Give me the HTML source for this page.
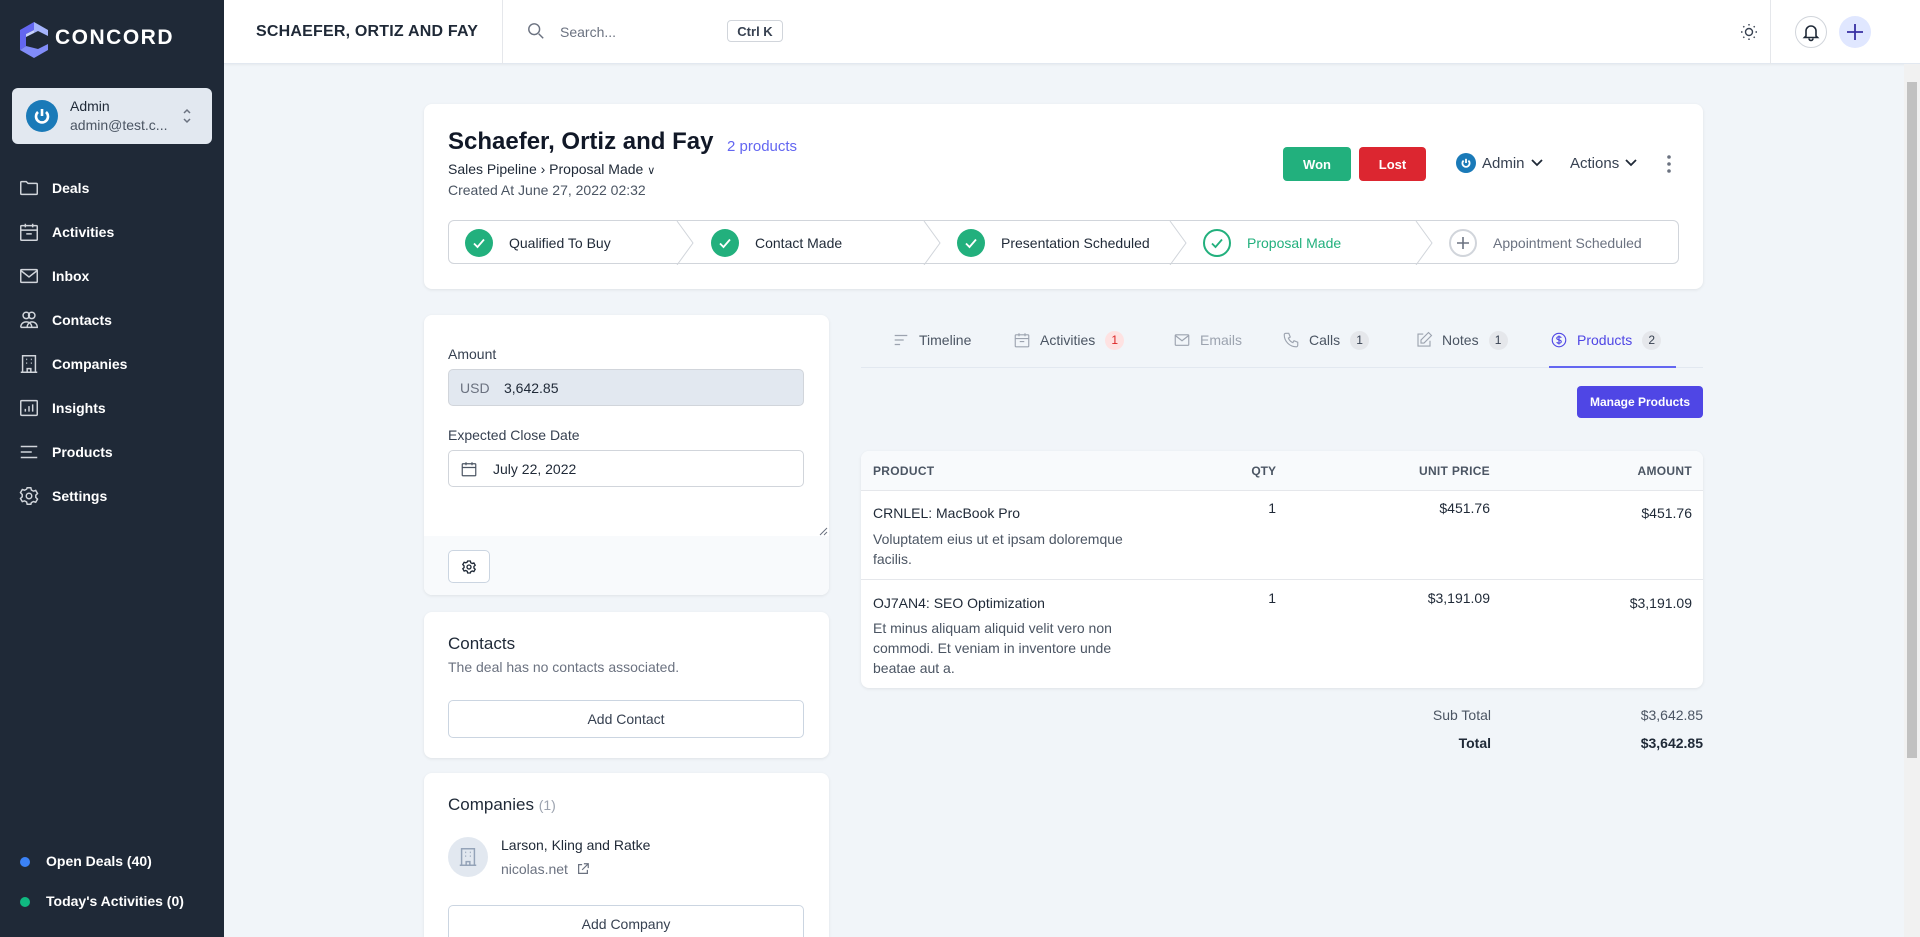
<!DOCTYPE html>
<html style="overflow:hidden;height:937px"><head><meta charset="utf-8">
<style>
*{box-sizing:border-box;margin:0;padding:0}
body{width:1920px;height:937px;overflow:hidden;font-family:"Liberation Sans",sans-serif;background:#f1f5f9;color:#1f2937;font-size:14px;position:relative}
.a{position:absolute}
.sb{left:0;top:0;width:224px;height:937px;background:#1f2937}
.nav{left:18px;color:#fff;font-weight:700;font-size:14px;display:flex;align-items:center;height:24px}
.nav svg{width:22px;height:22px;margin-right:12px;stroke:#d1d5db;fill:none;stroke-width:1.6}
.top{left:224px;top:0;width:1696px;height:64px;background:#fff;border-bottom:1px solid #e2e8f0;box-shadow:0 1px 2px rgba(0,0,0,.05)}
.card{background:#fff;border-radius:8px;box-shadow:0 1px 3px rgba(0,0,0,.08)}
.seg{position:absolute;top:0;height:44px;display:flex;align-items:center;font-size:14px}
.chk{width:28px;height:28px;border-radius:50%;background:#22b07d;display:flex;align-items:center;justify-content:center;margin-right:16px}
.tab{position:absolute;top:330px;display:flex;align-items:center;font-size:14px;color:#4b5563;height:20px}
.tab svg{width:18px;height:18px;stroke:#9ca3af;fill:none;stroke-width:1.5;margin-right:9px}
.badge{margin-left:10px;background:#e5e7eb;border-radius:50%;width:19px;height:19px;font-size:12px;display:flex;align-items:center;justify-content:center;color:#374151}
.btn{border:1px solid #cbd5e1;border-radius:5px;background:#fff;display:flex;align-items:center;justify-content:center;font-size:14px;color:#374151}
.r{text-align:right}
</style></head><body>
<div class="a sb"></div>
<svg class="a" style="left:18px;top:22px" width="32" height="36" viewBox="0 0 32 36"><polygon points="16,0 30,8 30,14 20,9 16,11 16,0" fill="#a5b4fc"/><polygon points="16,0 2,8 2,28 8,24 8,12 16,8" fill="#6366f1"/><polygon points="2,28 16,36 30,28 30,22 20,27 8,24" fill="#818cf8"/><polygon points="8,12 16,8 16,11 8,15" fill="#c7d2fe"/></svg>
<div class="a" style="left:55px;top:26px;color:#fff;font-size:21px;font-weight:700;letter-spacing:1.5px">CONCORD</div>
<div class="a" style="left:12px;top:88px;width:200px;height:56px;background:#e2e8f0;border-radius:6px"></div>
<div class="a" style="left:26px;top:100px;width:32px;height:32px;border-radius:50%;background:#1a7ab8"></div>
<svg class="a" style="left:32px;top:106px" width="20" height="20" viewBox="0 0 20 20"><path d="M6 6 A6 6 0 1 0 14 6" stroke="#fff" stroke-width="2.6" fill="none"/><path d="M10 3v7" stroke="#fff" stroke-width="2.6"/></svg>
<div class="a" style="left:70px;top:98px;font-size:14px;color:#1f2937">Admin</div>
<div class="a" style="left:70px;top:117px;font-size:14px;color:#4b5563">admin@test.c...</div>
<svg class="a" style="left:181px;top:107px" width="12" height="18" viewBox="0 0 12 18" fill="none" stroke="#6b7280" stroke-width="1.5"><path d="M3 6l3-3 3 3M3 12l3 3 3-3"/></svg>

<div class="a nav" style="top:176px"><svg viewBox="0 0 24 24"><path d="M3 6a1 1 0 0 1 1-1h5l2 2h9a1 1 0 0 1 1 1v10a1 1 0 0 1-1 1H4a1 1 0 0 1-1-1z"/></svg>Deals</div>
<div class="a nav" style="top:220px"><svg viewBox="0 0 24 24"><rect x="3" y="5" width="18" height="16" rx="1"/><path d="M8 3v4M16 3v4M3 10h18M9 14h6"/></svg>Activities</div>
<div class="a nav" style="top:264px"><svg viewBox="0 0 24 24"><rect x="3" y="5" width="18" height="14" rx="1"/><path d="M3 6l9 7 9-7"/></svg>Inbox</div>
<div class="a nav" style="top:308px"><svg viewBox="0 0 24 24"><circle cx="9" cy="7" r="3.5"/><circle cx="15" cy="7" r="3.5"/><path d="M3 20c0-4 3-6 6-6s6 2 6 6M10 20c0-4 3-6 5-6 3 0 6 2 6 6H3"/></svg>Contacts</div>
<div class="a nav" style="top:352px"><svg viewBox="0 0 24 24"><path d="M5 21V3h14v18M3 21h18M9 7h1M14 7h1M9 11h1M14 11h1M10 21v-4h4v4"/></svg>Companies</div>
<div class="a nav" style="top:396px"><svg viewBox="0 0 24 24"><rect x="3" y="4" width="18" height="16" rx="1"/><path d="M8 16v-3M12 16v-6M16 16v-8"/></svg>Insights</div>
<div class="a nav" style="top:440px"><svg viewBox="0 0 24 24"><path d="M3 6h18M3 12h12M3 18h18"/></svg>Products</div>
<div class="a nav" style="top:484px"><svg viewBox="0 0 24 24"><circle cx="12" cy="12" r="3"/><path d="M10 3h4l.6 2.5 2.2 1.2 2.5-.8 2 3.4-1.9 1.8v2.5l1.9 1.8-2 3.4-2.5-.8-2.2 1.2L14 21h-4l-.6-2.5-2.2-1.2-2.5.8-2-3.4 1.9-1.8v-2.5L2.7 8.3l2-3.4 2.5.8 2.2-1.2z"/></svg>Settings</div>
<div class="a" style="left:20px;top:857px;width:10px;height:10px;border-radius:50%;background:#3b82f6"></div>
<div class="a" style="left:46px;top:853px;color:#fff;font-weight:700;font-size:14px">Open Deals (40)</div>
<div class="a" style="left:20px;top:897px;width:10px;height:10px;border-radius:50%;background:#10b981"></div>
<div class="a" style="left:46px;top:893px;color:#fff;font-weight:700;font-size:14px">Today's Activities (0)</div>

<div class="a top"></div>
<div class="a" style="left:256px;top:23px;font-size:16px;font-weight:700;color:#1f2937;letter-spacing:.2px">SCHAEFER, ORTIZ AND FAY</div>
<div class="a" style="left:502px;top:0;width:1px;height:64px;background:#e5e7eb"></div>
<svg class="a" style="left:527px;top:22px" width="18" height="18" viewBox="0 0 20 20" fill="none" stroke="#6b7280" stroke-width="1.6"><circle cx="8" cy="8" r="6"/><path d="M13 13l5 5"/></svg>
<div class="a" style="left:560px;top:24px;color:#6b7280;font-size:14px">Search...</div>
<div class="a" style="left:727px;top:20px;width:56px;height:22px;border:1px solid #d1d5db;border-radius:4px;font-size:13px;font-weight:700;color:#374151;display:flex;align-items:center;justify-content:center">Ctrl K</div>
<svg class="a" style="left:1739px;top:22px" width="20" height="20" viewBox="0 0 20 20" fill="none" stroke="#374151" stroke-width="1.4"><circle cx="10" cy="10" r="3.5"/><path d="M10 2v1.5M10 16.5V18M2 10h1.5M16.5 10H18M4.3 4.3l1 1M14.7 14.7l1 1M4.3 15.7l1-1M14.7 5.3l1-1"/></svg>
<div class="a" style="left:1770px;top:0;width:1px;height:64px;background:#e5e7eb"></div>
<div class="a" style="left:1795px;top:16px;width:32px;height:32px;border-radius:50%;border:1px solid #d1d5db"></div>
<svg class="a" style="left:1801px;top:22px" width="20" height="20" viewBox="0 0 20 20" fill="none" stroke="#1f2937" stroke-width="1.6"><path d="M5 14V9a5 5 0 0 1 10 0v5l1.5 1.5h-13zM8 16.5a2 2 0 0 0 4 0"/></svg>
<div class="a" style="left:1839px;top:16px;width:32px;height:32px;border-radius:50%;background:#e0e7ff"></div>
<svg class="a" style="left:1845px;top:22px" width="20" height="20" viewBox="0 0 20 20" stroke="#3730a3" stroke-width="1.8"><path d="M10 2v16M2 10h16"/></svg>
<div class="a" style="left:1904px;top:64px;width:16px;height:873px;background:#f1f1f1"></div>
<div class="a" style="left:1907px;top:82px;width:10px;height:676px;background:#c1c1c1"></div>

<div class="a card" style="left:424px;top:104px;width:1279px;height:185px"></div>
<div class="a" style="left:448px;top:128px;font-size:24px;font-weight:700;color:#111827">Schaefer, Ortiz and Fay</div>
<div class="a" style="left:727px;top:138px;font-size:15px;color:#6366f1">2 products</div>
<div class="a" style="left:448px;top:161px;font-size:14px;color:#1f2937">Sales Pipeline &#8250; Proposal Made <span style="font-size:11px">&#8744;</span></div>
<div class="a" style="left:448px;top:182px;font-size:14px;color:#4b5563">Created At June 27, 2022 02:32</div>
<div class="a" style="left:1283px;top:147px;width:68px;height:34px;background:#22b07d;border-radius:4px;color:#fff;font-size:13px;font-weight:700;display:flex;align-items:center;justify-content:center">Won</div>
<div class="a" style="left:1359px;top:147px;width:67px;height:34px;background:#dc2630;border-radius:4px;color:#fff;font-size:13px;font-weight:700;display:flex;align-items:center;justify-content:center">Lost</div>
<div class="a" style="left:1456px;top:153px;width:20px;height:20px;border-radius:50%;background:#1a7ab8"></div>
<svg class="a" style="left:1460px;top:157px" width="12" height="12" viewBox="0 0 20 20"><path d="M6 6 A6 6 0 1 0 14 6" stroke="#fff" stroke-width="3" fill="none"/><path d="M10 3v7" stroke="#fff" stroke-width="3"/></svg>
<div class="a" style="left:1482px;top:155px;font-size:15px;color:#374151">Admin</div>
<svg class="a" style="left:1530px;top:158px" width="14" height="10" viewBox="0 0 14 10" fill="none" stroke="#1f2937" stroke-width="1.8"><path d="M2 2l5 5 5-5"/></svg>
<div class="a" style="left:1570px;top:155px;font-size:15px;color:#374151">Actions</div>
<svg class="a" style="left:1624px;top:158px" width="14" height="10" viewBox="0 0 14 10" fill="none" stroke="#1f2937" stroke-width="1.8"><path d="M2 2l5 5 5-5"/></svg>
<svg class="a" style="left:1666px;top:154px" width="6" height="20" viewBox="0 0 6 20" fill="#6b7280"><circle cx="3" cy="3" r="1.8"/><circle cx="3" cy="10" r="1.8"/><circle cx="3" cy="17" r="1.8"/></svg>

<div class="a" style="left:448px;top:220px;width:1231px;height:44px;border:1px solid #d1d5db;border-radius:6px">
 <svg class="a" style="left:0;top:0" width="1231" height="44" fill="none" stroke="#d1d5db" stroke-width="1"><path d="M228 0l16 22-16 22M475 0l16 22-16 22M721 0l16 22-16 22M967 0l16 22-16 22"/></svg>
 <div class="seg" style="left:16px"><div class="chk"><svg width="16" height="16" viewBox="0 0 16 16" fill="none" stroke="#fff" stroke-width="1.8"><path d="M3 8.5l3.5 3.5L13 4.5"/></svg></div>Qualified To Buy</div>
 <div class="seg" style="left:262px"><div class="chk"><svg width="16" height="16" viewBox="0 0 16 16" fill="none" stroke="#fff" stroke-width="1.8"><path d="M3 8.5l3.5 3.5L13 4.5"/></svg></div>Contact Made</div>
 <div class="seg" style="left:508px"><div class="chk"><svg width="16" height="16" viewBox="0 0 16 16" fill="none" stroke="#fff" stroke-width="1.8"><path d="M3 8.5l3.5 3.5L13 4.5"/></svg></div>Presentation Scheduled</div>
 <div class="seg" style="left:754px;color:#22b07d"><div class="chk" style="background:#fff;border:2px solid #22b07d"><svg width="16" height="16" viewBox="0 0 16 16" fill="none" stroke="#22b07d" stroke-width="1.8"><path d="M3 8.5l3.5 3.5L13 4.5"/></svg></div>Proposal Made</div>
 <div class="seg" style="left:1000px;color:#6b7280"><div class="chk" style="background:#fff;border:2px solid #d1d5db"><svg width="16" height="16" viewBox="0 0 16 16" fill="none" stroke="#6b7280" stroke-width="1.6"><path d="M8 2v12M2 8h12"/></svg></div>Appointment Scheduled</div>
</div>

<div class="a card" style="left:424px;top:315px;width:405px;height:280px;overflow:hidden">
 <div class="a" style="left:0;top:221px;width:405px;height:59px;background:#f8fafc"></div>
</div>
<div class="a" style="left:448px;top:346px;font-size:14px;color:#374151">Amount</div>
<div class="a" style="left:448px;top:369px;width:356px;height:37px;background:#e2e8f0;border:1px solid #d1d5db;border-radius:5px"></div>
<div class="a" style="left:460px;top:380px;font-size:14px;color:#6b7280">USD</div>
<div class="a" style="left:504px;top:380px;font-size:14px;color:#1f2937">3,642.85</div>
<div class="a" style="left:448px;top:427px;font-size:14px;color:#374151">Expected Close Date</div>
<div class="a" style="left:448px;top:450px;width:356px;height:37px;background:#fff;border:1px solid #d1d5db;border-radius:5px"></div>
<svg class="a" style="left:460px;top:460px" width="18" height="18" viewBox="0 0 24 24" fill="none" stroke="#4b5563" stroke-width="1.6"><rect x="3" y="5" width="18" height="16" rx="1"/><path d="M8 3v4M16 3v4M3 10h18"/></svg>
<div class="a" style="left:493px;top:461px;font-size:14px;color:#1f2937">July 22, 2022</div>
<svg class="a" style="left:818px;top:526px" width="10" height="10" viewBox="0 0 10 10" stroke="#6b7280"><path d="M9 2L2 9M9 6L6 9"/></svg>
<div class="a btn" style="left:448px;top:550px;width:42px;height:33px"><svg width="16" height="16" viewBox="0 0 24 24" fill="none" stroke="#1f2937" stroke-width="2"><circle cx="12" cy="12" r="3"/><path d="M10 3h4l.6 2.5 2.2 1.2 2.5-.8 2 3.4-1.9 1.8v2.5l1.9 1.8-2 3.4-2.5-.8-2.2 1.2L14 21h-4l-.6-2.5-2.2-1.2-2.5.8-2-3.4 1.9-1.8v-2.5L2.7 8.3l2-3.4 2.5.8 2.2-1.2z"/></svg></div>

<div class="a card" style="left:424px;top:612px;width:405px;height:146px"></div>
<div class="a" style="left:448px;top:634px;font-size:17px;color:#1f2937">Contacts</div>
<div class="a" style="left:448px;top:659px;font-size:14px;color:#6b7280">The deal has no contacts associated.</div>
<div class="a btn" style="left:448px;top:700px;width:356px;height:38px">Add Contact</div>

<div class="a card" style="left:424px;top:773px;width:405px;height:164px;border-radius:8px 8px 0 0"></div>
<div class="a" style="left:448px;top:795px;font-size:17px;color:#1f2937">Companies <span style="color:#9ca3af;font-size:14px">(1)</span></div>
<div class="a" style="left:448px;top:837px;width:40px;height:40px;border-radius:50%;background:#e2e8f0"></div>
<svg class="a" style="left:457px;top:846px" width="22" height="22" viewBox="0 0 24 24" fill="none" stroke="#94a3b8" stroke-width="1.6"><path d="M5 21V3h14v18M3 21h18M9 7h1M14 7h1M9 11h1M14 11h1M10 21v-4h4v4"/></svg>
<div class="a" style="left:501px;top:837px;font-size:14px;color:#1f2937">Larson, Kling and Ratke</div>
<div class="a" style="left:501px;top:861px;font-size:14px;color:#6b7280">nicolas.net</div>
<svg class="a" style="left:576px;top:862px" width="14" height="14" viewBox="0 0 16 16" fill="none" stroke="#6b7280" stroke-width="1.4"><path d="M7 3H3v10h10V9M9 2h5v5M14 2L7 9"/></svg>
<div class="a btn" style="left:448px;top:905px;width:356px;height:32px;border-bottom:none;border-radius:5px 5px 0 0;align-items:flex-start;padding-top:10px">Add Company</div>

<div class="a" style="left:861px;top:367px;width:842px;height:1px;background:#e2e8f0"></div>
<div class="a" style="left:1549px;top:366px;width:127px;height:2px;background:#6366f1"></div>
<div class="tab" style="left:892px"><svg viewBox="0 0 20 20"><path d="M3 5h14M3 10h10M3 15h6"/></svg>Timeline</div>
<div class="tab" style="left:1013px"><svg viewBox="0 0 24 24"><rect x="3" y="5" width="18" height="16" rx="1"/><path d="M8 3v4M16 3v4M3 10h18M9 14h6"/></svg>Activities<div class="badge" style="background:#fee2e2;color:#dc2626">1</div></div>
<div class="tab" style="left:1173px;color:#9ca3af"><svg viewBox="0 0 24 24"><rect x="3" y="5" width="18" height="14" rx="1"/><path d="M3 6l9 7 9-7"/></svg>Emails</div>
<div class="tab" style="left:1282px"><svg viewBox="0 0 24 24"><path d="M5 3h4l2 5-2.5 1.5a11 11 0 0 0 6 6L16 13l5 2v4a2 2 0 0 1-2 2A16 16 0 0 1 3 5a2 2 0 0 1 2-2"/></svg>Calls<div class="badge">1</div></div>
<div class="tab" style="left:1415px"><svg viewBox="0 0 24 24"><path d="M11 4H4v16h16v-7M18 2l4 4-10 10H8v-4z"/></svg>Notes<div class="badge">1</div></div>
<div class="tab" style="left:1550px;color:#4f46e5"><svg viewBox="0 0 24 24" style="stroke:#4f46e5"><circle cx="12" cy="12" r="9"/><path d="M15 9c-.5-1-1.5-1.5-3-1.5s-3 .8-3 2.2 1.5 1.8 3 2.2 3 .8 3 2.2-1.5 2.2-3 2.2-2.5-.5-3-1.5M12 6v12"/></svg>Products<div class="badge">2</div></div>

<div class="a" style="left:1577px;top:386px;width:126px;height:32px;background:#4f46e5;border-radius:4px;color:#fff;font-size:12px;font-weight:700;display:flex;align-items:center;justify-content:center">Manage Products</div>

<div class="a card" style="left:861px;top:451px;width:842px;height:237px;overflow:hidden">
 <div class="a" style="left:0;top:0;width:842px;height:40px;background:#f8fafc;border-bottom:1px solid #e5e7eb"></div>
 <div class="a" style="left:0;top:128px;width:842px;height:1px;background:#e5e7eb"></div>
</div>
<div class="a" style="left:873px;top:464px;font-size:12px;font-weight:700;color:#4b5563;letter-spacing:.3px">PRODUCT</div>
<div class="a r" style="left:1175px;width:101px;top:464px;font-size:12px;font-weight:700;color:#4b5563">QTY</div>
<div class="a r" style="left:1340px;width:150px;top:464px;font-size:12px;font-weight:700;color:#4b5563;letter-spacing:.3px">UNIT PRICE</div>
<div class="a r" style="left:1540px;width:152px;top:464px;font-size:12px;font-weight:700;color:#4b5563;letter-spacing:.3px">AMOUNT</div>

<div class="a" style="left:873px;top:505px;font-size:14px;color:#1f2937">CRNLEL: MacBook Pro</div>
<div class="a" style="left:873px;top:529px;font-size:14px;color:#4b5563;line-height:20px;width:275px">Voluptatem eius ut et ipsam doloremque facilis.</div>
<div class="a r" style="left:1175px;width:101px;top:500px">1</div>
<div class="a r" style="left:1340px;width:150px;top:500px">$451.76</div>
<div class="a r" style="left:1540px;width:152px;top:505px">$451.76</div>

<div class="a" style="left:873px;top:595px;font-size:14px;color:#1f2937">OJ7AN4: SEO Optimization</div>
<div class="a" style="left:873px;top:618px;font-size:14px;color:#4b5563;line-height:20px;width:268px">Et minus aliquam aliquid velit vero non commodi. Et veniam in inventore unde beatae aut a.</div>
<div class="a r" style="left:1175px;width:101px;top:590px">1</div>
<div class="a r" style="left:1340px;width:150px;top:590px">$3,191.09</div>
<div class="a r" style="left:1540px;width:152px;top:595px">$3,191.09</div>

<div class="a r" style="left:1340px;width:151px;top:707px;color:#4b5563">Sub Total</div>
<div class="a r" style="left:1540px;width:163px;top:707px;color:#4b5563">$3,642.85</div>
<div class="a r" style="left:1340px;width:151px;top:735px;font-weight:700;color:#1f2937">Total</div>
<div class="a r" style="left:1540px;width:163px;top:735px;font-weight:700;color:#1f2937">$3,642.85</div>
</body></html>
